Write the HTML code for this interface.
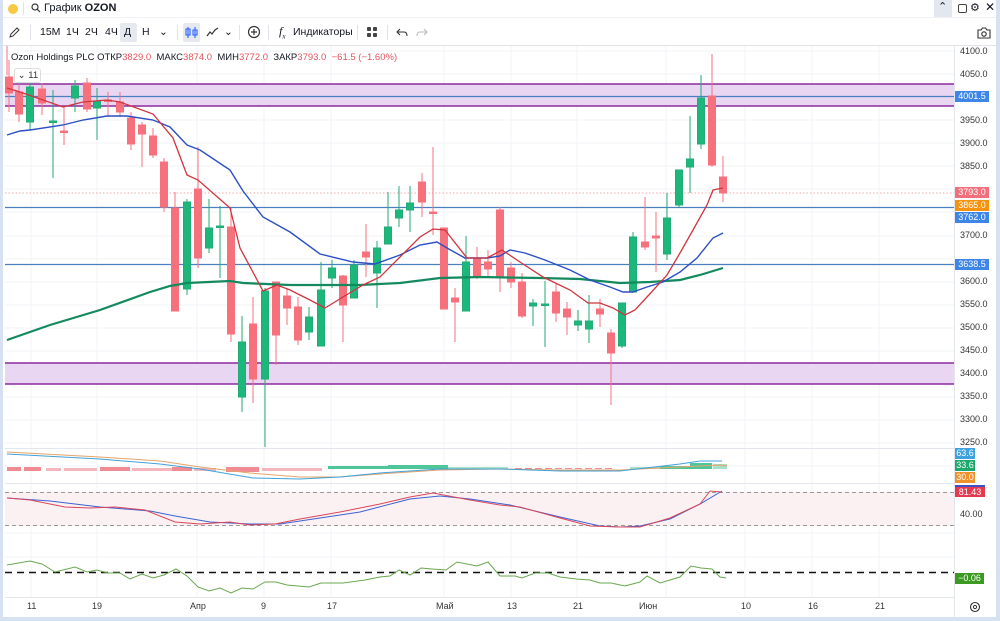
<!DOCTYPE html>
<html><head><meta charset="utf-8">
<style>
html,body{margin:0;padding:0;width:1000px;height:621px;overflow:hidden;background:#fff;font-family:"Liberation Sans","DejaVu Sans",sans-serif;}
.wrap{position:absolute;left:0;top:0;width:1000px;height:621px;}
.top1{position:absolute;left:0;top:0;width:1000px;height:18px;font-size:11px;color:#131722;}
.tb{position:absolute;left:0;top:20px;width:1000px;height:25px;font-size:10.5px;color:#131722;}
.tb span{position:absolute;top:6px;}
.leg{position:absolute;left:11px;top:52px;font-size:9.5px;color:#131722;white-space:nowrap;}
.leg b{font-weight:normal;color:#e5535f;}
.ax{position:absolute;left:960px;font-size:9px;color:#333;}
.tag{position:absolute;left:955px;width:34px;height:11px;font-size:9px;color:#fff;text-align:center;line-height:11px;}
.tl{position:absolute;top:601px;font-size:9px;color:#333;}
</style></head><body><div class="wrap">
<div class="top1">
<div style="position:absolute;left:8px;top:4px;width:10px;height:10px;border-radius:50%;background:#f7c843"></div>
<div style="position:absolute;left:23px;top:2px;width:1px;height:13px;background:#e0e3eb"></div>
<svg style="position:absolute;left:31px;top:3px" width="10" height="10"><circle cx="4" cy="4" r="3" fill="none" stroke="#333" stroke-width="1.2"/><line x1="6.3" y1="6.3" x2="9" y2="9" stroke="#333" stroke-width="1.2"/></svg>
<span style="position:absolute;left:44px;top:2px">График <b>OZON</b></span>
<div style="position:absolute;left:934px;top:0;width:18px;height:17px;background:#e3e8f0"></div>
<span style="position:absolute;left:938px;top:0px;font-size:11px">⌃</span>
<div style="position:absolute;left:958px;top:4px;width:7px;height:7px;border:1.2px solid #444;border-radius:2px"></div>
<span style="position:absolute;left:970px;top:1px;font-size:11px">⚙</span>
<span style="position:absolute;left:985px;top:0px;font-size:12px">✕</span>
</div>
<div style="position:absolute;left:0;top:17px;width:1000px;height:1px;background:#eef0f3"></div>
<div class="tb">
<svg style="position:absolute;left:9px;top:7px" width="11" height="11"><path d="M1 10 L2 7 L8 1 L10 3 L4 9 Z" fill="none" stroke="#333" stroke-width="1"/></svg>
<div style="position:absolute;left:30px;top:5px;width:1px;height:15px;background:#e0e3eb"></div>
<span style="left:40px">15М</span><span style="left:66px">1Ч</span><span style="left:85px">2Ч</span><span style="left:105px">4Ч</span>
<div style="position:absolute;left:120px;top:3px;width:17px;height:19px;background:#e6e9ef;border-radius:2px"></div>
<span style="left:124px">Д</span><span style="left:142px">Н</span><span style="left:159px">⌄</span>
<div style="position:absolute;left:177px;top:5px;width:1px;height:15px;background:#e0e3eb"></div>
<div style="position:absolute;left:183px;top:3px;width:17px;height:19px;background:#e6e9ef;border-radius:2px"></div>
<svg style="position:absolute;left:185px;top:6px" width="14" height="13"><path d="M3 1V12M3 3H1V9H5V3ZM10 1V12M8 4H12V9H8Z" fill="none" stroke="#2962ff" stroke-width="1.1"/></svg>
<svg style="position:absolute;left:206px;top:7px" width="13" height="10"><path d="M1 9 L4 5 L6 7 L9 3 L12 1" fill="none" stroke="#333" stroke-width="1.2"/></svg>
<span style="left:224px">⌄</span>
<div style="position:absolute;left:239px;top:5px;width:1px;height:15px;background:#e0e3eb"></div>
<svg style="position:absolute;left:247px;top:5px" width="14" height="14"><circle cx="7" cy="7" r="5.5" fill="none" stroke="#333" stroke-width="1.2"/><path d="M7 4V10M4 7H10" stroke="#333" stroke-width="1.2"/></svg>
<div style="position:absolute;left:268px;top:5px;width:1px;height:15px;background:#e0e3eb"></div>
<span style="left:279px;font-style:italic;font-family:'Liberation Serif',serif;font-size:12px;top:4px">f<sub style="font-size:7px">x</sub></span>
<span style="left:293px">Индикаторы</span>
<div style="position:absolute;left:357px;top:5px;width:1px;height:15px;background:#e0e3eb"></div>
<svg style="position:absolute;left:367px;top:7px" width="11" height="11"><rect x="0" y="0" width="4" height="4" rx="1" fill="#444"/><rect x="6" y="0" width="4" height="4" rx="1" fill="#444"/><rect x="0" y="6" width="4" height="4" rx="1" fill="#444"/><rect x="6" y="6" width="4" height="4" rx="1" fill="#444"/></svg>
<div style="position:absolute;left:387px;top:5px;width:1px;height:15px;background:#e0e3eb"></div>
<svg style="position:absolute;left:396px;top:8px" width="12" height="9"><path d="M4 1 L1 4 L4 7 M1 4 H8 Q11 4 11 8" fill="none" stroke="#333" stroke-width="1.1"/></svg>
<svg style="position:absolute;left:416px;top:8px" width="12" height="9"><path d="M8 1 L11 4 L8 7 M11 4 H4 Q1 4 1 8" fill="none" stroke="#bbb" stroke-width="1.1"/></svg>
<svg style="position:absolute;left:977px;top:6px" width="14" height="13"><path d="M1 4H4L5.5 2H8.5L10 4H13V12H1Z" fill="none" stroke="#333" stroke-width="1.1"/><circle cx="7" cy="8" r="2.2" fill="none" stroke="#333" stroke-width="1.1"/></svg>
</div>
<div style="position:absolute;left:0;top:45px;width:1000px;height:1px;background:#e0e3eb"></div>

<svg style="position:absolute;left:0;top:0" width="1000" height="621">
<g stroke="#f0f3f7" stroke-width="1">
<line x1="5" y1="51" x2="954" y2="51"/><line x1="5" y1="74" x2="954" y2="74"/><line x1="5" y1="97" x2="954" y2="97"/><line x1="5" y1="120" x2="954" y2="120"/><line x1="5" y1="143" x2="954" y2="143"/><line x1="5" y1="166" x2="954" y2="166"/><line x1="5" y1="189" x2="954" y2="189"/><line x1="5" y1="212" x2="954" y2="212"/><line x1="5" y1="236" x2="954" y2="236"/><line x1="5" y1="259" x2="954" y2="259"/><line x1="5" y1="282" x2="954" y2="282"/><line x1="5" y1="305" x2="954" y2="305"/><line x1="5" y1="328" x2="954" y2="328"/><line x1="5" y1="351" x2="954" y2="351"/><line x1="5" y1="374" x2="954" y2="374"/><line x1="5" y1="397" x2="954" y2="397"/><line x1="5" y1="420" x2="954" y2="420"/><line x1="5" y1="443" x2="954" y2="443"/>
<line x1="31" y1="46" x2="31" y2="597"/><line x1="97" y1="46" x2="97" y2="597"/><line x1="197" y1="46" x2="197" y2="597"/><line x1="264" y1="46" x2="264" y2="597"/><line x1="331" y1="46" x2="331" y2="597"/><line x1="444" y1="46" x2="444" y2="597"/><line x1="511" y1="46" x2="511" y2="597"/><line x1="577" y1="46" x2="577" y2="597"/><line x1="666" y1="46" x2="666" y2="597"/><line x1="745" y1="46" x2="745" y2="597"/><line x1="812" y1="46" x2="812" y2="597"/><line x1="879" y1="46" x2="879" y2="597"/>
<line x1="5" y1="466" x2="954" y2="466"/><line x1="5" y1="509" x2="954" y2="509"/><line x1="5" y1="533" x2="954" y2="533"/><line x1="5" y1="557" x2="954" y2="557"/>
</g>
<g stroke="#e3e6ec"><line x1="5" y1="448.5" x2="954" y2="448.5"/><line x1="5" y1="483.5" x2="954" y2="483.5"/><line x1="5" y1="597.5" x2="954" y2="597.5"/><line x1="954.5" y1="46" x2="954.5" y2="621"/></g>
<!-- zones -->
<rect x="5" y="84" width="949" height="22" fill="#e9d6f2"/>
<line x1="5" y1="84" x2="954" y2="84" stroke="#8e2a9e" stroke-width="1.5"/><line x1="5" y1="106" x2="954" y2="106" stroke="#8e2a9e" stroke-width="1.5"/>
<rect x="5" y="363" width="949" height="21" fill="#e9d6f2"/>
<line x1="5" y1="363" x2="954" y2="363" stroke="#8e2a9e" stroke-width="1.5"/><line x1="5" y1="384" x2="954" y2="384" stroke="#8e2a9e" stroke-width="1.5"/>
<g stroke="#4a7fc0" stroke-width="1.2"><line x1="5" y1="96.5" x2="954" y2="96.5"/><line x1="5" y1="207.5" x2="954" y2="207.5"/><line x1="5" y1="264.5" x2="954" y2="264.5"/></g>
<line x1="5" y1="193" x2="954" y2="193" stroke="#f08a92" stroke-width="0.8" stroke-dasharray="1.5 2"/>
<!-- candles -->
<g id="c"></g>
<g stroke-width="1">
<g stroke="#f7717d" fill="#f7717d">
<line x1="9" y1="60" x2="9" y2="112"/><rect x="5.5" y="77" width="7" height="16"/>
<line x1="19" y1="84" x2="19" y2="122"/><rect x="15.5" y="92" width="7" height="22"/>
<line x1="42" y1="83" x2="42" y2="115"/><rect x="38.5" y="89" width="7" height="14"/>
<line x1="64" y1="107" x2="64" y2="145"/><rect x="60.5" y="131" width="7" height="1.5"/>
<line x1="87" y1="78" x2="87" y2="112"/><rect x="83.5" y="83" width="7" height="26"/>
<line x1="108" y1="92" x2="108" y2="117"/><rect x="104.5" y="100" width="7" height="1.5"/>
<line x1="120" y1="92" x2="120" y2="117"/><rect x="116.5" y="102" width="7" height="10"/>
<line x1="131" y1="112" x2="131" y2="150"/><rect x="127.5" y="118" width="7" height="26"/>
<line x1="142" y1="122" x2="142" y2="167"/><rect x="138.5" y="125" width="7" height="9"/>
<line x1="153" y1="128" x2="153" y2="158"/><rect x="149.5" y="136" width="7" height="19"/>
<line x1="164" y1="158" x2="164" y2="212"/><rect x="160.5" y="162" width="7" height="45"/>
<line x1="175" y1="192" x2="175" y2="311"/><rect x="171.5" y="208" width="7" height="103"/>
<line x1="198" y1="147" x2="198" y2="268"/><rect x="194.5" y="189" width="7" height="69"/>
<line x1="231" y1="208" x2="231" y2="342"/><rect x="227.5" y="227" width="7" height="107"/>
<line x1="253" y1="297" x2="253" y2="403"/><rect x="249.5" y="324" width="7" height="55"/>
<line x1="276" y1="282" x2="276" y2="365"/><rect x="272.5" y="282" width="7" height="53"/>
<line x1="287" y1="288" x2="287" y2="325"/><rect x="283.5" y="296" width="7" height="12"/>
<line x1="298" y1="297" x2="298" y2="345"/><rect x="294.5" y="307" width="7" height="33"/>
<line x1="343" y1="275" x2="343" y2="342"/><rect x="339.5" y="276" width="7" height="29"/>
<line x1="366" y1="224" x2="366" y2="277"/><rect x="362.5" y="252" width="7" height="5"/>
<line x1="422" y1="173" x2="422" y2="217"/><rect x="418.5" y="182" width="7" height="20"/>
<line x1="433" y1="147" x2="433" y2="235"/><rect x="429.5" y="212" width="7" height="1.5"/>
<line x1="444" y1="228" x2="444" y2="309"/><rect x="440.5" y="228" width="7" height="81"/>
<line x1="455" y1="288" x2="455" y2="342"/><rect x="451.5" y="298" width="7" height="4"/>
<line x1="477" y1="247" x2="477" y2="279"/><rect x="473.5" y="259" width="7" height="17"/>
<line x1="488" y1="250" x2="488" y2="277"/><rect x="484.5" y="262" width="7" height="7"/>
<line x1="500" y1="207" x2="500" y2="292"/><rect x="496.5" y="210" width="7" height="66"/>
<line x1="511" y1="262" x2="511" y2="288"/><rect x="507.5" y="268" width="7" height="14"/>
<line x1="522" y1="273" x2="522" y2="318"/><rect x="518.5" y="282" width="7" height="34"/>
<line x1="556" y1="284" x2="556" y2="322"/><rect x="552.5" y="292" width="7" height="21"/>
<line x1="567" y1="302" x2="567" y2="335"/><rect x="563.5" y="309" width="7" height="8"/>
<line x1="600" y1="299" x2="600" y2="327"/><rect x="596.5" y="309" width="7" height="5"/>
<line x1="611" y1="329" x2="611" y2="405"/><rect x="607.5" y="333" width="7" height="20"/>
<line x1="645" y1="197" x2="645" y2="250"/><rect x="641.5" y="242" width="7" height="5"/>
<line x1="656" y1="212" x2="656" y2="272"/><rect x="652.5" y="236" width="7" height="2"/>
<line x1="712" y1="54" x2="712" y2="167"/><rect x="708.5" y="96" width="7" height="69"/>
<line x1="723" y1="156" x2="723" y2="202"/><rect x="719.5" y="177" width="7" height="16"/>
</g>
<g stroke="#22ab74" fill="#1cb87b">
<line x1="30" y1="74" x2="30" y2="130"/><rect x="26.5" y="87" width="7" height="35"/>
<line x1="53" y1="90" x2="53" y2="178"/><rect x="49.5" y="121" width="7" height="1.5"/>
<line x1="75" y1="80" x2="75" y2="112"/><rect x="71.5" y="86" width="7" height="12"/>
<line x1="97" y1="88" x2="97" y2="140"/><rect x="93.5" y="101" width="7" height="7"/>
<line x1="187" y1="199" x2="187" y2="295"/><rect x="183.5" y="202" width="7" height="87"/>
<line x1="209" y1="199" x2="209" y2="253"/><rect x="205.5" y="228" width="7" height="20"/>
<line x1="220" y1="206" x2="220" y2="278"/><rect x="216.5" y="226" width="7" height="1.5"/>
<line x1="242" y1="316" x2="242" y2="412"/><rect x="238.5" y="342" width="7" height="55"/>
<line x1="265" y1="288" x2="265" y2="447"/><rect x="261.5" y="291" width="7" height="88"/>
<line x1="309" y1="307" x2="309" y2="340"/><rect x="305.5" y="317" width="7" height="15"/>
<line x1="321" y1="262" x2="321" y2="346"/><rect x="317.5" y="290" width="7" height="56"/>
<line x1="332" y1="260" x2="332" y2="288"/><rect x="328.5" y="268" width="7" height="10"/>
<line x1="354" y1="260" x2="354" y2="298"/><rect x="350.5" y="265" width="7" height="33"/>
<line x1="377" y1="241" x2="377" y2="308"/><rect x="373.5" y="248" width="7" height="25"/>
<line x1="388" y1="192" x2="388" y2="244"/><rect x="384.5" y="227" width="7" height="17"/>
<line x1="399" y1="186" x2="399" y2="227"/><rect x="395.5" y="210" width="7" height="8"/>
<line x1="410" y1="186" x2="410" y2="232"/><rect x="406.5" y="203" width="7" height="7"/>
<line x1="466" y1="236" x2="466" y2="311"/><rect x="462.5" y="262" width="7" height="49"/>
<line x1="533" y1="299" x2="533" y2="326"/><rect x="529.5" y="303" width="7" height="3"/>
<line x1="545" y1="281" x2="545" y2="347"/><rect x="541.5" y="304" width="7" height="1.5"/>
<line x1="578" y1="310" x2="578" y2="331"/><rect x="574.5" y="321" width="7" height="4"/>
<line x1="589" y1="295" x2="589" y2="343"/><rect x="585.5" y="321" width="7" height="8"/>
<line x1="622" y1="303" x2="622" y2="348"/><rect x="618.5" y="303" width="7" height="43"/>
<line x1="633" y1="232" x2="633" y2="293"/><rect x="629.5" y="237" width="7" height="55"/>
<line x1="667" y1="193" x2="667" y2="260"/><rect x="663.5" y="218" width="7" height="36"/>
<line x1="679" y1="170" x2="679" y2="208"/><rect x="675.5" y="170" width="7" height="35"/>
<line x1="690" y1="116" x2="690" y2="193"/><rect x="686.5" y="159" width="7" height="8"/>
<line x1="701" y1="75" x2="701" y2="149"/><rect x="697.5" y="98" width="7" height="46"/>
</g></g>
<!-- MAs -->
<polyline fill="none" stroke="#138a5e" stroke-width="2.2" points="7,340 50,325 100,310 150,292 170,286 187,283 230,281 243,283 290,285 340,285 360,285 400,283 440,278 480,277 540,278 580,279 620,283 650,282 680,280 700,275 723,268"/>
<polyline fill="none" stroke="#2b4fc4" stroke-width="1.4" points="7,135 20,131 30,130 63,125 83,120 107,116 127,116 153,120 170,127 187,145 200,150 230,170 243,191 263,217 290,232 320,254 353,262 375,264 400,255 420,245 437,242 447,248 465,258 487,258 500,256 510,250 525,253 545,260 570,270 590,280 610,287 623,292 633,292 647,287 663,282 680,272 697,258 713,238 723,233"/>
<polyline fill="none" stroke="#d0343f" stroke-width="1.3" points="7,88 20,92 63,107 83,102 107,100 120,102 153,114 173,138 187,175 198,180 230,208 240,248 263,291 277,285 290,290 310,300 325,308 343,297 363,285 380,277 400,257 420,237 433,229 445,230 467,258 487,258 502,250 520,262 543,277 570,290 588,303 600,303 613,308 625,315 635,310 647,297 667,275 680,253 693,230 707,205 713,190 723,188"/>
<!-- panel2 -->
<g>
<rect x="7" y="467" width="14" height="4" fill="#f08a93"/><rect x="24" y="467" width="17" height="4" fill="#f08a93"/><rect x="46" y="468" width="15" height="3" fill="#f4b6bd"/><rect x="64" y="468" width="33" height="3" fill="#f4b6bd"/><rect x="100" y="467" width="30" height="4" fill="#f08a93"/><rect x="132" y="468" width="40" height="3" fill="#f4b6bd"/><rect x="172" y="467" width="20" height="4" fill="#f08a93"/><rect x="194" y="468" width="22" height="3" fill="#f4b6bd"/><rect x="226" y="467" width="33" height="5" fill="#f08a93"/><rect x="262" y="468" width="60" height="3" fill="#f4b6bd"/>
<rect x="328" y="466" width="60" height="3" fill="#4fc59a"/><rect x="388" y="465" width="60" height="4" fill="#4fc59a"/><rect x="448" y="467" width="60" height="2" fill="#a8e0c8"/>
<line x1="515" y1="468.5" x2="615" y2="468.5" stroke="#f08a93" stroke-width="1" stroke-dasharray="7 3"/>
<rect x="630" y="467" width="30" height="2" fill="#a8e0c8"/><rect x="660" y="466" width="30" height="3" fill="#4fc59a"/><rect x="690" y="463" width="22" height="6" fill="#4fc59a"/><rect x="713" y="464" width="14" height="5" fill="#a8e0c8"/>
</g>
<polyline fill="none" stroke="#e6a46a" stroke-width="1" points="7,452 100,457 160,461 200,467 250,473 300,477 340,477 380,474 440,470 500,469 560,470 620,470 680,467 720,465 727,466"/>
<polyline fill="none" stroke="#41a2d8" stroke-width="1" points="7,454 100,459 160,464 200,469 253,478 300,479 340,477 380,473 440,469 500,469 560,471 620,471 680,464 700,461 722,461"/>
<!-- panel3 -->
<rect x="5" y="492" width="949" height="34" fill="#fcf1f2"/>
<line x1="5" y1="492.5" x2="954" y2="492.5" stroke="#999" stroke-dasharray="4 3"/>
<line x1="5" y1="525.5" x2="954" y2="525.5" stroke="#999" stroke-dasharray="4 3"/>
<polyline fill="none" stroke="#3a63d4" stroke-width="1" points="7,498 50,501 100,507 150,511 175,516 210,522 250,524 280,524 320,518 360,512 410,499 440,496 470,499 510,505 560,517 600,526 620,527 640,526 670,519 700,504 722,491"/>
<polyline fill="none" stroke="#d9475a" stroke-width="1" points="7,498 30,500 65,507 90,508 115,507 145,510 175,522 200,524 230,522 250,525 275,524 300,519 340,512 380,504 410,497 433,493 470,500 500,505 520,507 560,518 590,526 620,527 640,527 670,518 700,504 710,491 722,492"/>
<!-- panel4 -->
<line x1="5" y1="572.5" x2="954" y2="572.5" stroke="#111" stroke-width="1.4" stroke-dasharray="7 5"/>
<polyline fill="none" stroke="#6aa84f" stroke-width="1" points="7,565 30,561 42,564 55,572 75,567 87,572 97,570 108,573 120,573 130,579 142,574 153,578 164,575 176,569 187,576 198,587 209,591 220,588 231,593 242,588 253,589 265,582 276,582 287,585 309,587 321,583 343,583 365,580 380,577 390,576 399,570 410,575 421,568 432,569 446,570 457,562 477,566 488,562 500,576 515,576 522,578 535,573 548,573 560,577 576,579 590,580 600,583 611,583 625,586 640,582 647,576 660,583 670,580 680,577 691,566 701,568 712,569 720,577 726,578"/>
<line x1="7" y1="46" x2="7" y2="75" stroke="#f7717d"/>
</svg>

<div class="leg">Ozon Holdings PLC ОТКР<b>3829.0</b>&nbsp; МАКС<b>3874.0</b>&nbsp; МИН<b>3772.0</b>&nbsp; ЗАКР<b>3793.0</b>&nbsp; <b>−61.5 (−1.60%)</b></div>
<div style="position:absolute;left:14px;top:68px;width:25px;height:13px;border:1px solid #ddd;border-radius:3px;background:#fff;font-size:9.5px;line-height:13px;color:#333">&nbsp;⌄ 11</div>

<div class="ax" style="top:46px">4100.0</div><div class="ax" style="top:69px">4050.0</div><div class="ax" style="top:115px">3950.0</div><div class="ax" style="top:138px">3900.0</div><div class="ax" style="top:161px">3850.0</div><div class="ax" style="top:230px">3700.0</div><div class="ax" style="top:276px">3600.0</div><div class="ax" style="top:299px">3550.0</div><div class="ax" style="top:322px">3500.0</div><div class="ax" style="top:345px">3450.0</div><div class="ax" style="top:368px">3400.0</div><div class="ax" style="top:391px">3350.0</div><div class="ax" style="top:414px">3300.0</div><div class="ax" style="top:437px">3250.0</div><div class="ax" style="top:509px">40.00</div>
<div class="tag" style="top:91px;background:#3d86e8">4001.5</div>
<div class="tag" style="top:187px;background:#f2707c">3793.0</div>
<div class="tag" style="top:200px;background:#f5930f">3865.0</div>
<div class="tag" style="top:212px;background:#3d86e8">3762.0</div>
<div class="tag" style="top:259px;background:#3d86e8">3638.5</div>
<div class="tag" style="top:448px;width:20px;background:#3ea2e0">63.6</div>
<div class="tag" style="top:460px;width:20px;background:#1ea86d">33.6</div>
<div class="tag" style="top:472px;width:20px;background:#ef922e">30.0</div>
<div class="tag" style="top:485px;width:30px;background:#e5394f;border-top:2px solid #4050c0;height:10px">81.43</div>
<div class="tag" style="top:573px;width:29px;background:#3c9a22">−0.06</div>
<div class="tl" style="left:27px">11</div><div class="tl" style="left:92px">19</div><div class="tl" style="left:190px">Апр</div><div class="tl" style="left:261px">9</div><div class="tl" style="left:327px">17</div><div class="tl" style="left:436px">Май</div><div class="tl" style="left:507px">13</div><div class="tl" style="left:573px">21</div><div class="tl" style="left:639px">Июн</div><div class="tl" style="left:741px">10</div><div class="tl" style="left:808px">16</div><div class="tl" style="left:875px">21</div>
<svg style="position:absolute;left:969px;top:601px" width="12" height="12"><circle cx="6" cy="6" r="4.5" fill="none" stroke="#333" stroke-width="1.1"/><circle cx="6" cy="6" r="1.6" fill="none" stroke="#333"/></svg>
<div style="position:absolute;left:0;top:0;width:3px;height:621px;background:#d6e2f1"></div>
<div style="position:absolute;left:0;top:617px;width:1000px;height:4px;background:#d6e2f1"></div>
<div style="position:absolute;left:996px;top:0;width:4px;height:621px;background:#d6e2f1"></div>
</div></body></html>
